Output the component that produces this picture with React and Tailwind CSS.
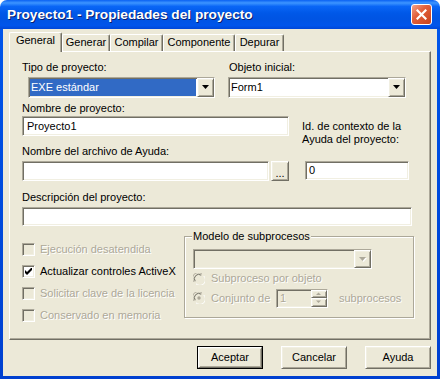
import React from 'react';

const field = "border border-t-[#ACA899] border-l-[#ACA899] border-r-white border-b-white shadow-[inset_1px_1px_0_#716F64,inset_-1px_-1px_0_#F1EFE2]";
const raised = "border border-t-white border-l-white border-r-[#716F64] border-b-[#716F64] shadow-[inset_1px_1px_0_#F1EFE2,inset_-1px_-1px_0_#ACA899] bg-[#ECE9D8]";
const dim = "text-[#ACA899] [text-shadow:1px_1px_0_#fff]";

const Arrow = ({ disabled }) => (
  <svg width="8" height="5" viewBox="0 0 8 5">
    {disabled && <polygon points="1,1 8,1 4.5,5" fill="#fff" />}
    <polygon points="0,0 7,0 3.5,4" fill={disabled ? '#ACA899' : '#000'} />
  </svg>
);

const Combo = ({ width, value, selected, disabled, height = 'h-[21px]' }) => (
  <div className={`${field} ${width} ${height} flex ${disabled ? 'bg-[#ECE9D8]' : 'bg-white'}`}>
    <div className="flex-1 flex p-[1px] items-stretch">
      {value && (
        <span className={`flex-1 flex items-center pl-[1px] ${selected ? 'bg-[#316AC5] text-white' : 'text-black'}`}>
          {value}
        </span>
      )}
    </div>
    <div className={`${raised} w-[17px] flex items-center justify-center`}>
      <Arrow disabled={disabled} />
    </div>
  </div>
);

const Check = ({ label, checked, disabled }) => (
  <div className="flex items-center h-[13px]">
    <div className={`${field} w-[13px] h-[13px] flex items-center justify-center ${disabled ? 'bg-[#ECE9D8]' : 'bg-white'}`}>
      {checked && (
        <svg width="7" height="7" viewBox="0 0 7 7">
          <path d="M0 2v3l2 2 5-5V-1L2 4z" fill="#000" />
        </svg>
      )}
    </div>
    <span className={`ml-[5px] ${disabled ? dim : ''}`}>{label}</span>
  </div>
);

const Radio = ({ on }) => (
  <svg width="12" height="12" viewBox="0 0 12 12">
    <circle cx="6" cy="6" r="5.5" fill="#ECE9D8" />
    <path d="M1.2 9A5.5 5.5 0 0 1 9 1.2" stroke="#ACA899" strokeWidth="1" fill="none" />
    <path d="M2.2 8.2A4.3 4.3 0 0 1 8.2 2.2" stroke="#716F64" strokeWidth="1" fill="none" />
    <path d="M10.8 3A5.5 5.5 0 0 1 3 10.8" stroke="#fff" strokeWidth="1" fill="none" />
    {on && <circle cx="6" cy="6" r="1.7" fill="#ACA899" />}
  </svg>
);

const tabs = [
  { name: 'General', w: 'w-[53px]', active: true },
  { name: 'Generar', w: 'w-[48px]' },
  { name: 'Compilar', w: 'w-[53px]' },
  { name: 'Componente', w: 'w-[72px]' },
  { name: 'Depurar', w: 'w-[49px]' },
];

export default function App() {
  return (
    <div className="w-[440px] h-[379px] flex flex-col font-['Liberation_Sans',Arial,sans-serif] text-[11px] leading-[13px] text-black select-none">
      <div className="h-[29px] rounded-t-[7px] flex items-center justify-between pl-[7px] pr-[8px] bg-[linear-gradient(to_bottom,#0A61F2_0%,#3D95FF_10%,#0A66F6_22%,#0058E8_45%,#0054E3_65%,#0055EB_88%,#0047D8_100%)]">
        <span className="text-white font-bold text-[13.7px] leading-[15px] [text-shadow:1px_1px_0_#0A1F6E] mt-[-1px]">
          Proyecto1 - Propiedades del proyecto
        </span>
        <div className="w-[21px] h-[21px] rounded-[3px] border border-white bg-[linear-gradient(135deg,#F2A38B_0%,#E2603C_40%,#C8421C_100%)] flex items-center justify-center">
          <svg width="11" height="11" viewBox="0 0 11 11">
            <path d="M1.5 1.5l8 8M9.5 1.5l-8 8" stroke="#fff" strokeWidth="2.2" strokeLinecap="square" />
          </svg>
        </div>
      </div>

      <div className="flex-1 flex px-[3px] pb-[3px] bg-[linear-gradient(to_bottom,#0055EA,#0040D0)]">
        <div className="flex-1 flex flex-col bg-[#ECE9D8] pt-[3px]">
          <div className="flex items-end h-[19px] ml-[6px]">
            {tabs.map((t) =>
              t.active ? (
                <div
                  key={t.name}
                  className={`${t.w} h-[20px] mb-[-1px] relative z-10 bg-[#ECE9D8] border-l border-t border-r border-l-white border-t-white border-r-[#716F64] shadow-[inset_-1px_0_0_#ACA899] rounded-t-[2px] flex justify-center pt-[1px]`}
                >
                  {t.name}
                </div>
              ) : (
                <div
                  key={t.name}
                  className={`${t.w} h-[17px] border-l border-t border-r border-l-white border-t-white border-r-[#716F64] shadow-[inset_-1px_0_0_#ACA899] rounded-t-[2px] flex justify-center pt-[1px]`}
                >
                  {t.name}
                </div>
              )
            )}
          </div>

          <div className="ml-[6px] w-[422px] h-[289px] border border-t-white border-l-white border-r-[#716F64] border-b-[#716F64] shadow-[inset_-1px_-1px_0_#ACA899] flex flex-col pl-[12px] pt-[9px]">
            <div className="flex">
              <div className="w-[206px] flex flex-col">
                <span>Tipo de proyecto:</span>
                <div className="mt-[3px] ml-[6px]">
                  <Combo width="w-[187px]" value="EXE estándar" selected />
                </div>
              </div>
              <div className="flex flex-col">
                <span className="ml-[1px]">Objeto inicial:</span>
                <div className="mt-[3px]">
                  <Combo width="w-[178px]" value="Form1" />
                </div>
              </div>
            </div>

            <div className="flex mt-[4px]">
              <div className="flex flex-col w-[267px]">
                <span>Nombre de proyecto:</span>
                <div className={`${field} bg-white mt-[1px] h-[20px] w-[267px] flex items-center pl-[4px]`}>Proyecto1</div>
                <span className="mt-[9px]">Nombre del archivo de Ayuda:</span>
                <div className="flex mt-[3px]">
                  <div className={`${field} bg-white h-[20px] w-[247px]`} />
                  <div className={`${raised} ml-[2px] h-[20px] w-[18px] flex items-end justify-center pb-[3px] leading-[8px]`}>...</div>
                </div>
              </div>
              <div className="flex flex-col ml-[13px] pt-[18px]">
                <span>Id. de contexto de la</span>
                <span>Ayuda del proyecto:</span>
                <div className={`${field} bg-white mt-[15px] ml-[3px] h-[19px] w-[104px] flex items-center pl-[3px]`}>0</div>
              </div>
            </div>

            <span className="mt-[10px]">Descripción del proyecto:</span>
            <div className={`${field} bg-white mt-[3px] h-[19px] w-[390px]`} />

            <div className="flex mt-[4px]">
              <div className="w-[162px] flex flex-col gap-[9px] pt-[13px]">
                <Check label="Ejecución desatendida" disabled />
                <Check label="Actualizar controles ActiveX" checked />
                <Check label="Solicitar clave de la licencia" disabled />
                <Check label="Conservado en memoria" disabled />
              </div>
              <div className="relative pt-[6px]">
                <span className="absolute left-[8px] top-0 px-[1px] bg-[#ECE9D8]">Modelo de subprocesos</span>
                <div className="w-[230px] h-[82px] border border-[#ACA899] shadow-[inset_1px_1px_0_#fff,1px_1px_0_#fff] flex flex-col pl-[8px] pt-[12px]">
                  <Combo width="w-[179px]" height="h-[20px]" disabled />
                  <div className="flex items-center h-[17px] mt-[1px]">
                    <Radio />
                    <span className={`ml-[6px] ${dim}`}>Subproceso por objeto</span>
                  </div>
                  <div className="flex items-center h-[20px] mt-[1px]">
                    <Radio on />
                    <span className={`ml-[6px] w-[65px] ${dim}`}>Conjunto de</span>
                    <div className={`${field} bg-[#ECE9D8] h-[19px] w-[52px] flex`}>
                      <span className={`flex-1 flex items-center pl-[3px] ${dim}`}>1</span>
                      <div className="flex flex-col w-[16px]">
                        <div className={`${raised} flex-1 flex items-center justify-center`}>
                          <svg width="6" height="4" viewBox="0 0 6 4"><polygon points="0,3 5,3 2.5,0.5" fill="#ACA899" /></svg>
                        </div>
                        <div className={`${raised} flex-1 flex items-center justify-center`}>
                          <svg width="6" height="4" viewBox="0 0 6 4"><polygon points="0,0.5 5,0.5 2.5,3" fill="#ACA899" /></svg>
                        </div>
                      </div>
                    </div>
                    <span className={`ml-[11px] ${dim}`}>subprocesos</span>
                  </div>
                </div>
              </div>
            </div>
          </div>

          <div className="flex justify-end gap-[18px] pr-[6px] mt-[6px]">
            <div className="border border-black">
              <div className={`${raised} w-[64px] h-[21px] flex items-center justify-center`}>Aceptar</div>
            </div>
            <div className={`${raised} w-[66px] h-[23px] flex items-center justify-center`}>Cancelar</div>
            <div className={`${raised} w-[66px] h-[23px] flex items-center justify-center`}>Ayuda</div>
          </div>
        </div>
      </div>
    </div>
  );
}
